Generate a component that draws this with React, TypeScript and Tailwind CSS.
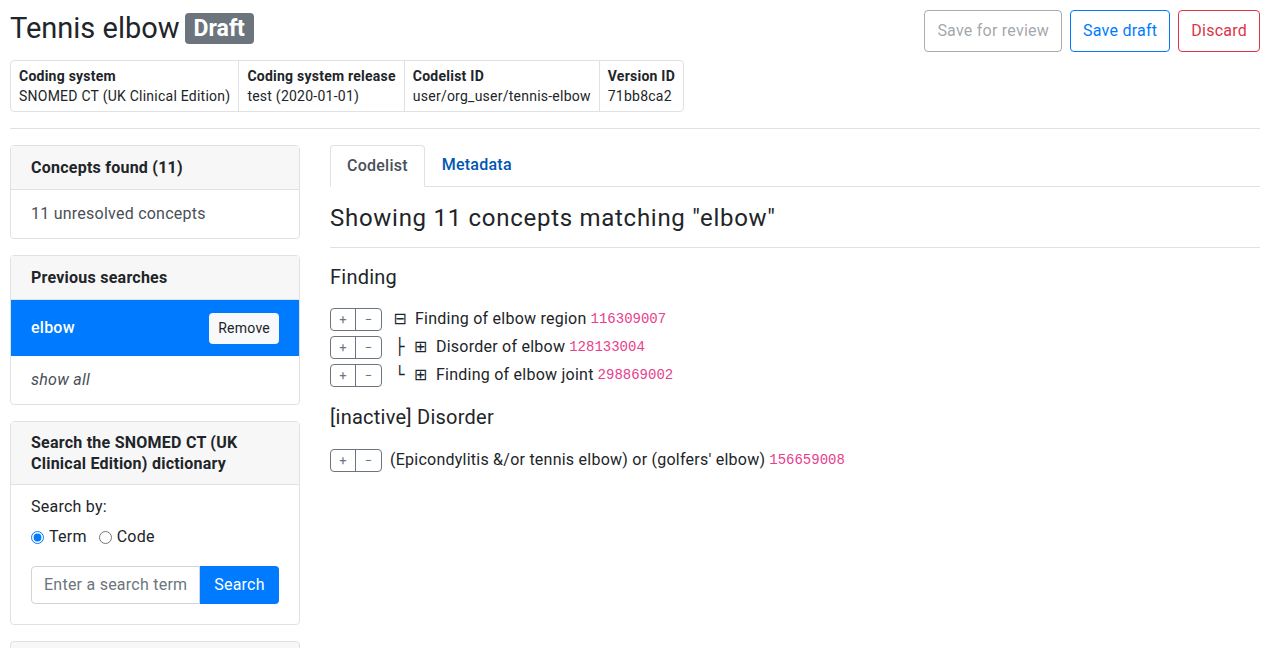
const font = { fontFamily: "Roboto, 'Noto Sans', sans-serif" };

const meta = [
  ["Coding system", "SNOMED CT (UK Clinical Edition)"],
  ["Coding system release", "test (2020-01-01)"],
  ["Codelist ID", "user/org_user/tennis-elbow"],
  ["Version ID", "71bb8ca2"],
];

const PlusMinus = () => (
  <div className="flex h-[23px] shrink-0 rounded border border-[#6c757d] text-[13px] leading-none text-[#6c757d]">
    <span className="flex w-[25px] items-center justify-center border-r border-[#6c757d]">+</span>
    <span className="flex w-[25px] items-center justify-center">−</span>
  </div>
);

const Code = ({ c }: { c: string }) => (
  <span
    className="ml-1 text-[14px] tracking-normal text-[#e83e8c]"
    style={{ fontFamily: "'Liberation Mono', 'DejaVu Sans Mono', monospace" }}
  >
    {c}
  </span>
);

const Glyph = ({ ch, w }: { ch: string; w: string }) => (
  <span className={`inline-block text-center text-[16px] ${w}`} style={{ fontFamily: "'DejaVu Sans', sans-serif" }}>
    {ch}
  </span>
);

const Row = ({ prefix, label, code }: { prefix: React.ReactNode; label: string; code: string }) => (
  <div className="flex h-[28px] items-center">
    <PlusMinus />
    <div className="ml-[8px] flex items-center text-[16px] text-[#212529]">
      {prefix}
      <span>{label}</span>
      <Code c={code} />
    </div>
  </div>
);

export default function App() {
  return (
    <div className="min-h-screen bg-white px-[10px] tracking-[0.015em] text-[#212529]" style={font}>
      {/* header */}
      <div className="flex items-start justify-between pt-[10px]">
        <div>
          <h1 className="flex items-center text-[29px] leading-[36px] tracking-normal">
            Tennis elbow
            <span className="ml-[5px] rounded bg-[#6c757d] px-[9px] text-[23px] font-bold leading-[31px] text-white">Draft</span>
          </h1>
          <table className="mt-[14px] border-separate border-spacing-0 rounded border border-[#dee2e6] text-[14px]">
            <tbody>
              <tr>
                {meta.map(([k], i) => (
                  <th key={k} className={`px-[8px] pt-[5px] text-left font-bold leading-[20px] ${i ? "border-l border-[#dee2e6]" : ""}`}>
                    {k}
                  </th>
                ))}
              </tr>
              <tr>
                {meta.map(([k, v], i) => (
                  <td key={k} className={`px-[8px] pb-[5px] leading-[20px] ${i ? "border-l border-[#dee2e6]" : ""}`}>
                    {v}
                  </td>
                ))}
              </tr>
            </tbody>
          </table>
        </div>
        <div className="flex gap-[8px] text-[16px]">
          <button className="h-[42px] rounded border border-[#6c757d]/60 px-[12px] text-[#6c757d]/65">Save for review</button>
          <button className="h-[42px] rounded border border-[#007bff] px-[12px] text-[#007bff]">Save draft</button>
          <button className="h-[42px] rounded border border-[#dc3545] px-[12px] text-[#dc3545]">Discard</button>
        </div>
      </div>

      <hr className="mt-[16px] border-[#dee2e6]" />

      <div className="mt-[16px] flex gap-[30px]">
        {/* sidebar */}
        <div className="flex w-[290px] shrink-0 flex-col gap-[16px] text-[16px]">
          <div className="rounded border border-[#dee2e6]">
            <div className="border-b border-[#dee2e6] bg-[#f7f7f7] px-[20px] py-[11px] font-bold leading-[21px]">Concepts found (11)</div>
            <div className="px-[20px] py-[12px] leading-[24px] text-[#495057]">11 unresolved concepts</div>
          </div>

          <div className="rounded border border-[#dee2e6]">
            <div className="border-b border-[#dee2e6] bg-[#f7f7f7] px-[20px] py-[11px] font-bold leading-[21px]">Previous searches</div>
            <div className="flex h-[56px] items-center justify-between bg-[#007bff] px-[20px] font-medium text-white">
              <span>elbow</span>
              <button className="h-[31px] rounded bg-[#f8f9fa] px-[9px] text-[14px] font-normal text-[#212529]">Remove</button>
            </div>
            <div className="px-[20px] py-[12px] italic leading-[24px] text-[#495057]">show all</div>
          </div>

          <div className="rounded border border-[#dee2e6]">
            <div className="border-b border-[#dee2e6] bg-[#f7f7f7] px-[20px] py-[10px] font-bold leading-[21px]">
              Search the SNOMED CT (UK Clinical Edition) dictionary
            </div>
            <div className="px-[20px] pt-[10px] pb-[20px]">
              <div className="leading-[24px]">Search by:</div>
              <div className="mt-[6px] flex items-center gap-[12px] leading-[24px]">
                <label className="flex items-center gap-[5px]">
                  <input type="radio" defaultChecked name="by" className="m-0 h-[13px] w-[13px] accent-[#007bff]" />
                  Term
                </label>
                <label className="flex items-center gap-[5px]">
                  <input type="radio" name="by" className="m-0 h-[13px] w-[13px]" />
                  Code
                </label>
              </div>
              <div className="mt-[17px] flex h-[38px]">
                <input
                  placeholder="Enter a search term"
                  className="w-[169px] rounded-l border border-[#ced4da] px-[12px] text-[16px] placeholder:text-[#6c757d]"
                />
                <button className="flex-1 rounded-r bg-[#007bff] text-white">Search</button>
              </div>
            </div>
          </div>

          <div className="h-[60px] rounded border border-[#dee2e6] bg-[#f7f7f7]" />
        </div>

        {/* main */}
        <div className="flex-1">
          <div className="flex border-b border-[#dee2e6] text-[16px]">
            <div className="-mb-px rounded-t border border-[#dee2e6] border-b-white bg-white px-[16px] py-[9px] font-medium leading-[22px] text-[#495057]">
              Codelist
            </div>
            <div className="px-[17px] py-[9px] font-medium leading-[22px] text-[#0056b3]">Metadata</div>
          </div>
          <h3 className="mt-[16px] text-[24px] leading-[30px] tracking-[0.03em]">Showing 11 concepts matching "elbow"</h3>
          <hr className="mt-[14px] border-[#dee2e6]" />
          <h4 className="mt-[17px] text-[20px] leading-[24px]">Finding</h4>
          <div className="mt-[16px]">
            <Row prefix={<Glyph ch="⊟" w="mr-[5px] w-[20px]" />} label="Finding of elbow region" code="116309007" />
            <Row
              prefix={
                <>
                  <Glyph ch="├" w="w-[20px]" />
                  <Glyph ch="⊞" w="mr-[5px] w-[21px]" />
                </>
              }
              label="Disorder of elbow"
              code="128133004"
            />
            <Row
              prefix={
                <>
                  <Glyph ch="└" w="w-[20px]" />
                  <Glyph ch="⊞" w="mr-[5px] w-[21px]" />
                </>
              }
              label="Finding of elbow joint"
              code="298869002"
            />
          </div>
          <h4 className="mt-[16px] text-[20px] leading-[24px]">[inactive] Disorder</h4>
          <div className="mt-[17px]">
            <Row prefix={null} label="(Epicondylitis &/or tennis elbow) or (golfers' elbow)" code="156659008" />
          </div>
        </div>
      </div>
    </div>
  );
}
